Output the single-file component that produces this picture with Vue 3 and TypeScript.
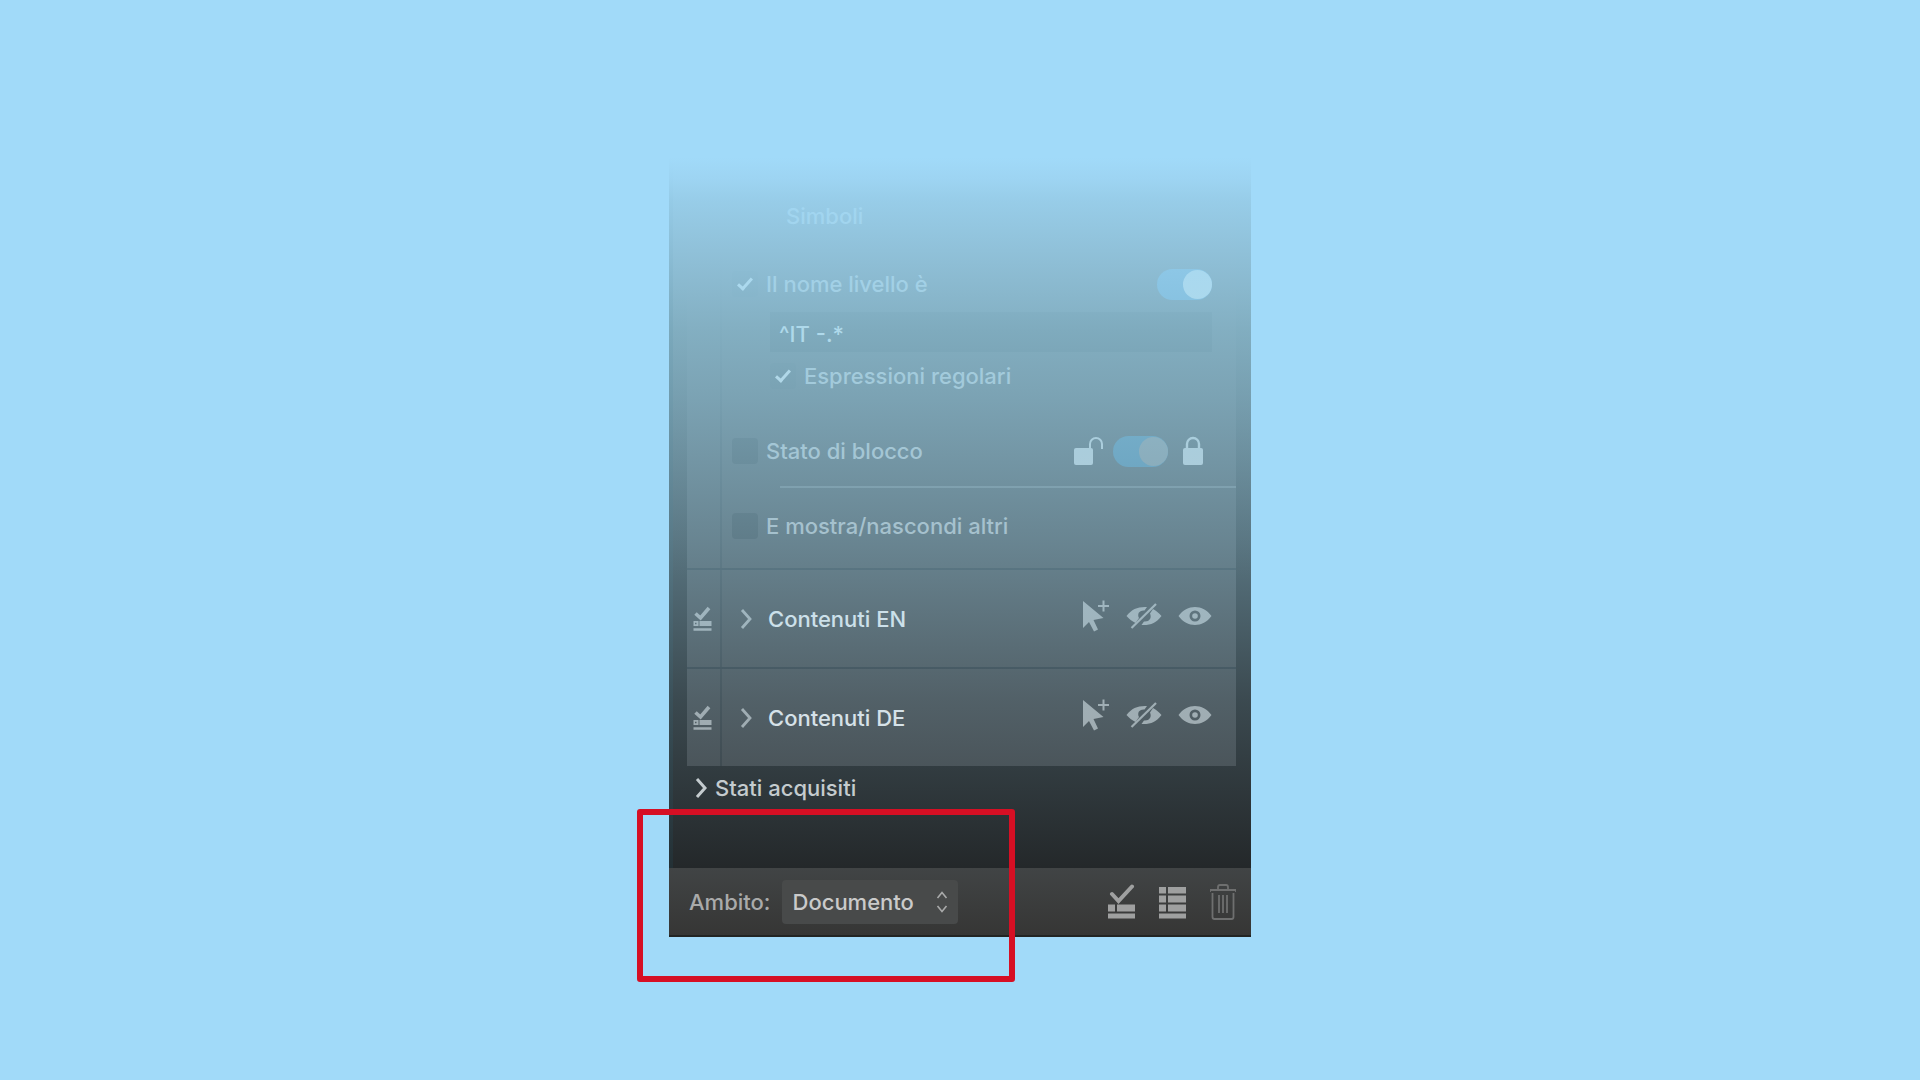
<script setup lang="ts">
import { ref } from 'vue'

interface StateItem {
  id: string
  name: string
}

const states: StateItem[] = [
  { id: 'en', name: 'Contenuti EN' },
  { id: 'de', name: 'Contenuti DE' },
]

const matchName = ref(true)
const nameVisible = ref(true)
const pattern = ref('^IT -.*')
const useRegex = ref(true)
const matchLock = ref(false)
const locked = ref(true)
const toggleOthers = ref(false)
const scope = ref('documento')
</script>

<template>
  <main class="stage">
    <section class="panel">
      <div class="body">
        <div class="states">
          <div class="state criteria">
            <div class="gutter"></div>
            <div class="fields">
              <div class="row symbols">Simboli</div>
              <div class="row name">
                <input id="match-name" v-model="matchName" class="box" type="checkbox" />
                <label for="match-name">Il nome livello è</label>
                <input v-model="nameVisible" class="switch push" type="checkbox" aria-label="Visibile" />
              </div>
              <input v-model="pattern" class="pattern" type="text" aria-label="Nome livello" />
              <div class="row regex">
                <input id="regex" v-model="useRegex" class="box" type="checkbox" />
                <label for="regex">Espressioni regolari</label>
              </div>
              <div class="row lock">
                <input id="match-lock" v-model="matchLock" class="box" type="checkbox" />
                <label for="match-lock">Stato di blocco</label>
                <svg class="push lock-icon" width="30" height="30" viewBox="0 0 30 30">
                  <rect x="1" y="12" width="19" height="17" rx="2" fill="currentColor" />
                  <path d="M17 12V8a6 6 0 0 1 12 0v5" fill="none" stroke="currentColor" stroke-width="2" />
                </svg>
                <input v-model="locked" class="switch dim" type="checkbox" aria-label="Bloccato" />
                <svg class="lock-icon" width="20" height="30" viewBox="0 0 20 30">
                  <rect x="0" y="12" width="20" height="17" rx="2" fill="currentColor" />
                  <path d="M4 13V8a6 6 0 0 1 12 0v5" fill="none" stroke="currentColor" stroke-width="2.4" />
                </svg>
              </div>
              <hr class="rule" />
              <div class="row others">
                <input id="others" v-model="toggleOthers" class="box" type="checkbox" />
                <label for="others">E mostra/nascondi altri</label>
              </div>
            </div>
          </div>

          <div v-for="item in states" :key="item.id" class="state">
            <div class="gutter">
              <svg width="20" height="26" viewBox="0 0 20 26">
                <path d="M2.500 7.500l5 4.500 8.500-10" fill="none" stroke="currentColor" stroke-width="3.6" />
                <path fill-rule="evenodd" d="M0.500 15h5v5h-5zM2 16.800v1.400h1.500v-1.400zM6.500 15h12v5h-12zM0.500 22.300h18v2.400h-18z" fill="currentColor" />
              </svg>
            </div>
            <div class="summary">
              <button class="icon" type="button" :aria-label="'Espandi ' + item.name">
                <svg width="12" height="20" viewBox="0 0 12 20">
                  <path d="M2 1l8 9-8 9" fill="none" stroke="currentColor" stroke-width="2.8" />
                </svg>
              </button>
              <span class="title">{{ item.name }}</span>
              <div class="actions">
                <button class="icon" type="button" aria-label="Seleziona">
                  <svg width="28" height="32" viewBox="0 0 28 32">
                    <path d="M1 1v27l6-6 5 9.500 4-2-4.500-9.500 10-2z" fill="currentColor" />
                    <path d="M21.500 0.500v11M16 6h11" stroke="currentColor" stroke-width="2" />
                  </svg>
                </button>
                <button class="icon" type="button" aria-label="Nascondi">
                  <svg width="36" height="26" viewBox="0 0 36 26">
                    <path d="M0.500 13C6 6 12 3.500 21 4l-2.500 3.500C13 7 11 11 13 15l-3.500 5C6 18 3 16 0.500 13z" fill="currentColor" />
                    <path d="M27 6c3.500 2 6 4 8.500 7-5.500 7-11 9.500-20 9l2.500-3.500c5.500 0.500 8-3.500 6-8z" fill="currentColor" />
                    <path d="M30 1L5.500 25" stroke="currentColor" stroke-width="2.2" />
                  </svg>
                </button>
                <button class="icon" type="button" aria-label="Mostra">
                  <svg width="34" height="20" viewBox="0 0 34 20">
                    <path fill-rule="evenodd" d="M0.500 10C9-2 25-2 33.500 10 25 22 9 22 0.500 10zM17 4.500a5.500 5.500 0 1 0 0 11 5.500 5.500 0 0 0 0-11z" fill="currentColor" />
                    <circle cx="17" cy="10" r="2.800" fill="currentColor" />
                  </svg>
                </button>
              </div>
            </div>
          </div>
        </div>

        <button class="captured" type="button">
          <svg width="12" height="20" viewBox="0 0 12 20">
            <path d="M2 1l8 9-8 9" fill="none" stroke="currentColor" stroke-width="3" />
          </svg>
          Stati acquisiti
        </button>
      </div>

      <footer class="footer">
        <label for="scope">Ambito:</label>
        <div class="scope">
          <select id="scope" v-model="scope">
            <option value="documento">Documento</option>
          </select>
          <svg class="arrows" width="12" height="22" viewBox="0 0 12 22">
            <path d="M1.500 7L6 1.500 10.500 7M1.500 15L6 20.500 10.500 15" fill="none" stroke="currentColor" stroke-width="1.600" />
          </svg>
        </div>
        <div class="tools">
          <button class="icon" type="button" aria-label="Nuovo stato">
            <svg width="28" height="36" viewBox="0 0 28 36">
              <path d="M4 10l6.500 7L24 2.500" fill="none" stroke="currentColor" stroke-width="4" stroke-linecap="round" />
              <path d="M0 20.500h7v7H0zM9 20.500h18v7H9zM0 29.500h27v5H0z" fill="currentColor" />
            </svg>
          </button>
          <button class="icon" type="button" aria-label="Acquisisci stato">
            <svg width="28" height="36" viewBox="0 0 28 36">
              <path d="M0 3h7v6.500H0zM9 3h18v6.500H9zM0 11.500h7v7H0zM9 11.500h18v7H9zM0 20.500h7v7H0zM9 20.500h18v7H9zM0 29.500h27v5H0z" fill="currentColor" />
            </svg>
          </button>
          <button class="icon faint" type="button" aria-label="Elimina">
            <svg width="26" height="36" viewBox="0 0 26 36">
              <path d="M0 8V6h26v2M8 6V3q0-2 2-2h6q2 0 2 2v3M2.500 9v24q0 2 2 2h17q2 0 2-2V9M9 11v18M13 11v18M17 11v18" fill="none" stroke="currentColor" stroke-width="1.800" />
            </svg>
          </button>
        </div>
      </footer>
      <div class="highlight"></div>
    </section>
  </main>
</template>

<style>
body {
  margin: 0;
  background: #a1daf9;
}
</style>

<style scoped>
.stage {
  display: flex;
  align-items: center;
  justify-content: center;
  min-height: 100vh;
  font: 500 22px/28px Inter, "Liberation Sans", sans-serif;
  color: #abadaf;
}

.panel {
  position: relative;
  width: 582px;
  max-width: 100%;
}

.body {
  position: relative;
  box-sizing: border-box;
  padding: 0 15px 58px 14px;
  border-left: 4px solid #233035;
  background: linear-gradient(#3e4447 20%, #24282a 60%);
}

.body::after {
  content: "";
  position: absolute;
  inset: 0 0 0 -4px;
  pointer-events: none;
  background: linear-gradient(
    rgb(161 218 249) 2%,
    rgb(161 218 249 / 0.96) 5%,
    rgb(160 218 248 / 0.91) 8%,
    rgb(160 218 246 / 0.82) 16%,
    rgb(158 218 243 / 0.71) 26%,
    rgb(158 218 243 / 0.63) 35%,
    rgb(158 218 243 / 0.52) 46%,
    rgb(158 218 243 / 0.43) 55%,
    rgb(158 218 243 / 0.34) 63%,
    rgb(158 218 243 / 0.19) 77%,
    rgb(158 218 243 / 0.12) 85%,
    rgb(158 218 243 / 0) 100%
  );
}

.state {
  display: flex;
  box-sizing: border-box;
  height: 99px;
  border-top: 2px solid #2c3338;
  background: #404447;
}

.state.criteria {
  height: auto;
  border-top: 0;
}

.gutter {
  display: flex;
  flex: none;
  align-items: center;
  justify-content: center;
  box-sizing: border-box;
  width: 35px;
  padding-right: 1px;
  border-right: 2px solid #33393d;
  color: #a0a3a5;
}

.criteria .gutter {
  border-image: linear-gradient(#404447 25%, #33393d 70%) 1;
}

.fields {
  flex: 1;
  display: flex;
  flex-direction: column;
  padding: 53px 0 22px;
}

.row {
  display: flex;
  align-items: center;
  height: 40px;
  padding: 0 24px 0 10px;
}

.symbols {
  padding-left: 64px;
}

.name {
  margin-top: 28px;
}

.regex {
  margin-top: 4px;
  padding-left: 48px;
}

.lock {
  margin-top: 35px;
  padding-right: 33px;
}

.others {
  margin-top: 18px;
}

.push {
  margin-left: auto;
}

.box {
  appearance: none;
  display: grid;
  place-items: center;
  width: 26px;
  height: 26px;
  margin: 0 8px 0 0;
  border-radius: 4px;
  background: #303538;
}

.box:checked {
  background: #3a4043;
}

.box:checked::before {
  content: "";
  width: 5px;
  height: 12px;
  margin-bottom: 4px;
  border: solid #d4d4d4;
  border-width: 0 3px 3px 0;
  transform: rotate(42deg);
}

.switch {
  appearance: none;
  display: flex;
  justify-content: flex-end;
  align-items: center;
  width: 55px;
  height: 31px;
  margin-top: 0;
  margin-right: 0;
  margin-bottom: 0;
  border-radius: 16px;
  background: #4079a6;
}

.switch::before {
  content: "";
  width: 29px;
  height: 29px;
  border-radius: 50%;
  background: #d0d4d6;
}

.switch.dim {
  margin: 0 15px 0 10px;
  background: #396d8c;
}

.switch.dim::before {
  background: #74797c;
}

.lock-icon {
  color: #babdbf;
}

.pattern {
  box-sizing: border-box;
  height: 40px;
  margin: 8px 24px 0 48px;
  padding: 3px 9px 0;
  border: 0;
  background: #32373a;
  font: inherit;
  color: #d6d6d6;
}

.rule {
  width: calc(100% - 58px);
  height: 2px;
  margin: 15px 0 0 58px;
  border: 0;
  background: #606669;
}

.summary {
  flex: 1;
  display: flex;
  align-items: center;
  padding: 0 24px 0 18px;
}

.title {
  margin-left: 16px;
  color: #e0e3e6;
}

.actions {
  display: flex;
  align-items: center;
  gap: 16px;
  margin-left: auto;
  padding-bottom: 5px;
}

.icon {
  display: flex;
  padding: 0;
  border: 0;
  background: none;
  color: #a0a4a6;
}

.captured {
  display: flex;
  align-items: center;
  gap: 8px;
  height: 44px;
  padding: 0 8px;
  border: 0;
  background: none;
  font: inherit;
  color: #c8cacb;
}

.footer {
  display: flex;
  align-items: center;
  box-sizing: border-box;
  height: 69px;
  padding: 0 15px 0 20px;
  border-bottom: 2px solid #222423;
  background: linear-gradient(#414445, #363635);
  color: #a9aaaa;
}

.scope {
  position: relative;
  margin-left: 11px;
}

.scope select {
  appearance: none;
  display: block;
  width: 176px;
  height: 44px;
  padding: 0 11px;
  border: 0;
  border-radius: 4px;
  background: #484a4a;
  font: inherit;
  color: #cacaca;
}

.arrows {
  position: absolute;
  top: 11px;
  right: 10px;
  pointer-events: none;
}

.tools {
  display: flex;
  gap: 23px;
  margin-left: auto;
}

.tools .icon {
  color: #9fa0a0;
}

.tools .faint {
  color: #6e6f6f;
}

.highlight {
  position: absolute;
  left: -32px;
  bottom: -45px;
  box-sizing: border-box;
  width: 378px;
  height: 173px;
  border: 6px solid #d60f24;
  border-radius: 3px;
  pointer-events: none;
}
</style>
